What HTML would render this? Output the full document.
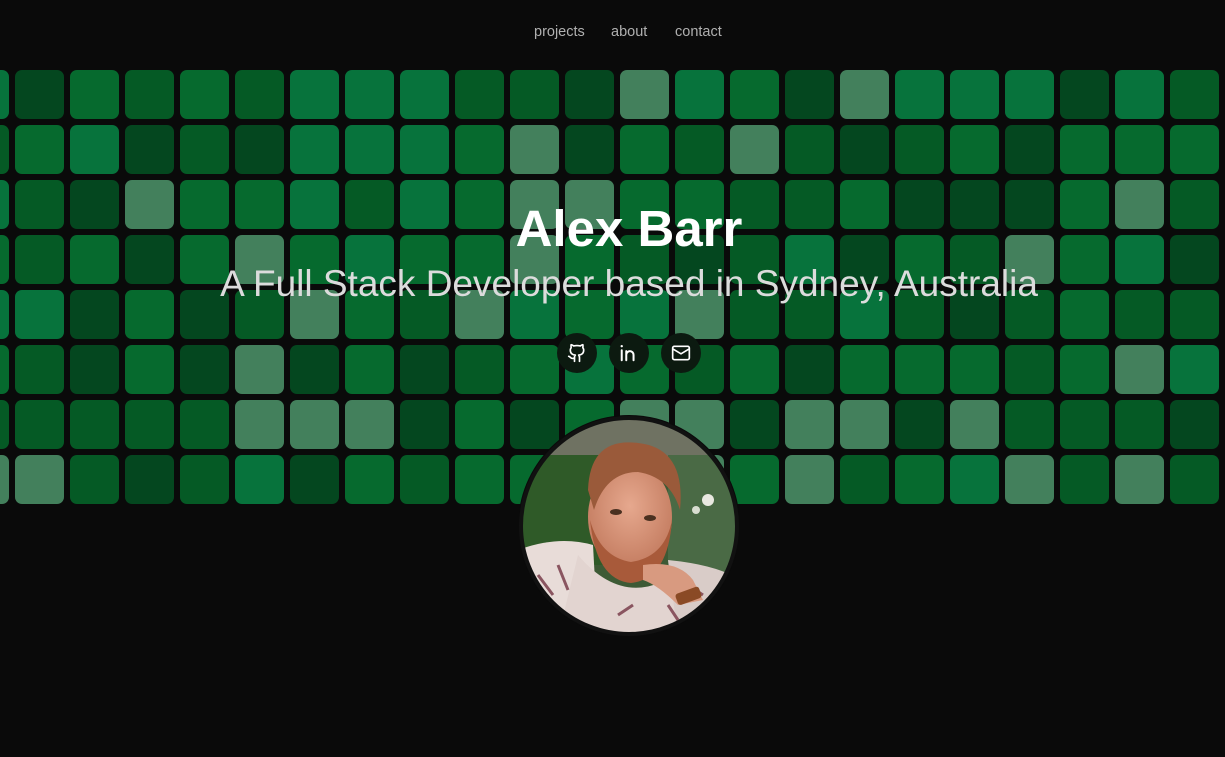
<!DOCTYPE html>
<html><head><meta charset="utf-8"><style>
html,body{margin:0;padding:0;background:#0a0a0a;width:1225px;height:757px;overflow:hidden;font-family:"Liberation Sans",sans-serif}
.nv{position:absolute;top:24px;font-size:14.5px;color:#b0b0b0}
.grid{position:absolute;left:-40px;top:70px;display:grid;grid-template-columns:repeat(23,49px);grid-auto-rows:49px;gap:6px}
.grid i{display:block;border-radius:7px}
.D{background:#04471f}.M{background:#055a25}.G{background:#066a2e}.B{background:#07733c}.L{background:#43805c}
h1{position:absolute;top:199px;left:0;width:1258px;margin:0;text-align:center;font-size:51px;font-weight:bold;color:#fff}
.sub{position:absolute;top:263px;left:0;width:1258px;text-align:center;font-size:37px;color:#dcdcdc}
.ic{position:absolute;top:333px;width:40px;height:40px;border-radius:50%;background:#0c1a10;display:flex;align-items:center;justify-content:center}
.ph{position:absolute;left:518px;top:415px;width:222px;height:222px;border-radius:50%;background:#0a0a0a;}
</style></head><body>
<span class="nv" style="left:534px">projects</span><span class="nv" style="left:611px">about</span><span class="nv" style="left:675px">contact</span>
<div class="grid">
<i class="B"></i><i class="D"></i><i class="G"></i><i class="M"></i><i class="G"></i><i class="M"></i><i class="B"></i><i class="B"></i><i class="B"></i><i class="M"></i><i class="M"></i><i class="D"></i><i class="L"></i><i class="B"></i><i class="G"></i><i class="D"></i><i class="L"></i><i class="B"></i><i class="B"></i><i class="B"></i><i class="D"></i><i class="B"></i><i class="M"></i>
<i class="M"></i><i class="G"></i><i class="B"></i><i class="D"></i><i class="M"></i><i class="D"></i><i class="B"></i><i class="B"></i><i class="B"></i><i class="G"></i><i class="L"></i><i class="D"></i><i class="G"></i><i class="M"></i><i class="L"></i><i class="M"></i><i class="D"></i><i class="M"></i><i class="G"></i><i class="D"></i><i class="G"></i><i class="G"></i><i class="G"></i>
<i class="B"></i><i class="M"></i><i class="D"></i><i class="L"></i><i class="G"></i><i class="G"></i><i class="B"></i><i class="M"></i><i class="B"></i><i class="G"></i><i class="L"></i><i class="L"></i><i class="G"></i><i class="G"></i><i class="M"></i><i class="M"></i><i class="G"></i><i class="D"></i><i class="D"></i><i class="D"></i><i class="G"></i><i class="L"></i><i class="M"></i>
<i class="G"></i><i class="M"></i><i class="G"></i><i class="D"></i><i class="G"></i><i class="L"></i><i class="G"></i><i class="B"></i><i class="G"></i><i class="G"></i><i class="L"></i><i class="G"></i><i class="M"></i><i class="D"></i><i class="M"></i><i class="B"></i><i class="D"></i><i class="G"></i><i class="M"></i><i class="L"></i><i class="G"></i><i class="B"></i><i class="D"></i>
<i class="B"></i><i class="B"></i><i class="D"></i><i class="G"></i><i class="D"></i><i class="M"></i><i class="L"></i><i class="G"></i><i class="M"></i><i class="L"></i><i class="B"></i><i class="G"></i><i class="B"></i><i class="L"></i><i class="M"></i><i class="M"></i><i class="B"></i><i class="M"></i><i class="D"></i><i class="M"></i><i class="G"></i><i class="M"></i><i class="M"></i>
<i class="G"></i><i class="M"></i><i class="D"></i><i class="G"></i><i class="D"></i><i class="L"></i><i class="D"></i><i class="G"></i><i class="D"></i><i class="M"></i><i class="G"></i><i class="B"></i><i class="G"></i><i class="M"></i><i class="G"></i><i class="D"></i><i class="G"></i><i class="G"></i><i class="G"></i><i class="M"></i><i class="G"></i><i class="L"></i><i class="B"></i>
<i class="M"></i><i class="M"></i><i class="M"></i><i class="M"></i><i class="M"></i><i class="L"></i><i class="L"></i><i class="L"></i><i class="D"></i><i class="G"></i><i class="D"></i><i class="G"></i><i class="L"></i><i class="L"></i><i class="D"></i><i class="L"></i><i class="L"></i><i class="D"></i><i class="L"></i><i class="M"></i><i class="M"></i><i class="M"></i><i class="D"></i>
<i class="L"></i><i class="L"></i><i class="M"></i><i class="D"></i><i class="M"></i><i class="B"></i><i class="D"></i><i class="G"></i><i class="M"></i><i class="G"></i><i class="G"></i><i class="G"></i><i class="L"></i><i class="L"></i><i class="G"></i><i class="L"></i><i class="M"></i><i class="G"></i><i class="B"></i><i class="L"></i><i class="M"></i><i class="L"></i><i class="M"></i>
</div>
<h1>Alex Barr</h1>
<div class="sub">A Full Stack Developer based in Sydney, Australia</div>
<div class="ic" style="left:557px"><svg width="20" height="20" viewBox="0 0 24 24" fill="none" stroke="#fff" stroke-width="2" stroke-linecap="round" stroke-linejoin="round"><path d="M15 22v-4a4.8 4.8 0 0 0-1-3.5c3 0 6-2 6-5.5.08-1.25-.27-2.48-1-3.5.28-1.15.28-2.350 0-3.5 0 0-1 0-3 1.5-2.640-.5-5.360-.5-8 0C6 2 5 2 5 2c-.3 1.15-.3 2.35 0 3.5A5.4 5.4 0 0 0 4 9c0 3.5 3 5.5 6 5.5-.39.49-.68 1.05-.85 1.65S8.93 17.38 9 18v4"/><path d="M9 18c-4.51 2-5-2-7-2"/></svg></div>
<div class="ic" style="left:609px"><svg width="22" height="20" viewBox="0 0 24 22" fill="none" stroke="#fff" stroke-width="2.2" stroke-linecap="round"><circle cx="4" cy="3.5" r="1.3" fill="#fff" stroke="none"/><path d="M4 8v11M9 19v-6a4 4 0 0 1 8 0v6M9 19V9"/></svg></div>
<div class="ic" style="left:661px"><svg width="20" height="20" viewBox="0 0 24 24" fill="none" stroke="#fff" stroke-width="2" stroke-linejoin="round"><rect x="2" y="4" width="20" height="16" rx="2"/><path d="M2 7l10 6 10-6"/></svg></div>
<div class="ph"><svg width="222" height="222" viewBox="0 0 222 222">
<defs><clipPath id="c"><circle cx="111" cy="111" r="107"/></clipPath>
<radialGradient id="sk" cx="0.5" cy="0.4" r="0.6"><stop offset="0" stop-color="#e6a88e"/><stop offset="1" stop-color="#c27a5e"/></radialGradient></defs>
<g clip-path="url(#c)">
<rect width="222" height="222" fill="#3d5a35"/>
<rect x="0" y="0" width="222" height="50" fill="#6f7262"/>
<rect x="0" y="40" width="90" height="110" fill="#2f5a28"/>
<rect x="150" y="40" width="72" height="130" fill="#4a6a45"/>
<circle cx="190" cy="85" r="6" fill="#e8e8e0"/><circle cx="178" cy="95" r="4" fill="#d8ddd0"/>
<path d="M0 135 Q40 120 75 130 L80 222 L0 222Z" fill="#e8dcd8"/>
<path d="M60 140 Q111 200 170 150 L190 222 L40 222Z" fill="#e2d4d0"/>
<path d="M150 145 Q200 150 222 165 L222 222 L160 222Z" fill="#d9ccc8"/>
<path d="M20 160 l15 20 M40 150 l10 25 M30 190 l20 10 M100 200 l15 -10 M150 190 l10 15 M170 170 l15 10" stroke="#8a5560" stroke-width="3"/>
<ellipse cx="112" cy="102" rx="42" ry="55" fill="url(#sk)"/>
<path d="M72 105 Q78 165 113 168 Q150 164 154 105 Q147 142 113 147 Q82 142 72 105Z" fill="#a85a3a"/>
<path d="M70 75 Q72 22 120 28 Q168 33 162 95 Q152 62 120 57 Q88 57 76 95Z" fill="#9a5a3a"/>
<ellipse cx="98" cy="97" rx="6" ry="3" fill="#4a3020"/><ellipse cx="132" cy="103" rx="6" ry="3" fill="#4a3020"/>
<path d="M125 150 Q160 145 175 165 L185 185 L160 190 Q140 170 125 165Z" fill="#d89a80"/>
<rect x="158" y="175" width="25" height="12" rx="3" fill="#8a4a25" transform="rotate(-20 170 181)"/>
</g>
<circle cx="111" cy="111" r="108" fill="none" stroke="#111" stroke-width="4"/>
</svg></div>
</body></html>
